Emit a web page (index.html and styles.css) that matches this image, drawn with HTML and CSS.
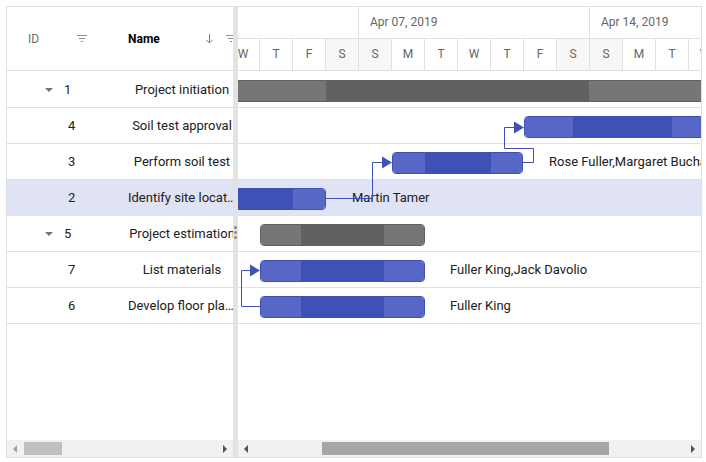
FILE: index.html
```html
<!DOCTYPE html>
<html>
<head>
<meta charset="utf-8">
<link rel="stylesheet" href="styles.css">
</head>
<body>
<div class="gantt">
  <div class="grid-pane">
    <div class="grid-header">
      <div class="hcell id-h">
        <span class="htext">ID</span>
        <svg class="filter" width="10" height="8" viewBox="0 0 10 8"><path d="M0 0.5H10M2 3.5H8M4 6.5H6" stroke="#8f8f8f" stroke-width="1"/></svg>
      </div>
      <div class="hcell name-h">
        <span class="htext bold">Name</span>
        <svg class="sort" width="7" height="10" viewBox="0 0 7 10"><path d="M3.5 0V9M0.5 6L3.5 9L6.5 6" stroke="#7a7a8c" stroke-width="1" fill="none"/></svg>
        <svg class="filter" width="10" height="8" viewBox="0 0 10 8"><path d="M0 0.5H10M2 3.5H8M4 6.5H6" stroke="#8f8f8f" stroke-width="1"/></svg>
      </div>
    </div>
    <div class="grid-body">
      <div class="row"><div class="cell id parent"><span class="expand"></span>1</div><div class="cell name">Project initiation</div></div>
      <div class="row"><div class="cell id">4</div><div class="cell name">Soil test approval</div></div>
      <div class="row"><div class="cell id">3</div><div class="cell name">Perform soil test</div></div>
      <div class="row sel"><div class="cell id">2</div><div class="cell name">Identify site location</div></div>
      <div class="row"><div class="cell id parent"><span class="expand"></span>5</div><div class="cell name">Project estimation</div></div>
      <div class="row"><div class="cell id">7</div><div class="cell name">List materials</div></div>
      <div class="row"><div class="cell id">6</div><div class="cell name">Develop floor plan for estimation</div></div>
    </div>
    <div class="hscroll">
      <span class="arr left dim"></span>
      <span class="thumb light" style="margin-left:7px;width:38px"></span>
      <span class="spacer"></span>
      <span class="arr right"></span>
    </div>
  </div>
  <div class="splitter"><span class="handle"><i></i><i></i><i></i></span></div>
  <div class="chart-pane">
    <div class="timeline">
      <div class="tier">
        <div class="wcell first"></div>
        <div class="wcell">Apr 07, 2019</div>
        <div class="wcell">Apr 14, 2019</div>
      </div>
      <div class="tier">
        <div class="dcell">W</div>
        <div class="dcell">T</div>
        <div class="dcell">F</div>
        <div class="dcell we">S</div>
        <div class="dcell we">S</div>
        <div class="dcell">M</div>
        <div class="dcell">T</div>
        <div class="dcell">W</div>
        <div class="dcell">T</div>
        <div class="dcell">F</div>
        <div class="dcell we">S</div>
        <div class="dcell we">S</div>
        <div class="dcell">M</div>
        <div class="dcell">T</div>
        <div class="dcell">W</div>
      </div>
    </div>
    <div class="chart-body">
      <div class="crow"></div>
      <div class="crow"></div>
      <div class="crow"></div>
      <div class="crow sel"></div>
      <div class="crow"></div>
      <div class="crow"></div>
      <div class="crow"></div>

      <div class="bar parent" style="left:-10px;top:9px;width:490px">
        <span class="seg l" style="width:97px"></span><span class="seg d" style="width:263px"></span><span class="seg l" style="width:128px"></span>
      </div>
      <div class="bar" style="left:286px;top:45px;width:200px">
        <span class="seg l" style="width:48px"></span><span class="seg d" style="width:99px"></span><span class="seg l" style="width:51px"></span>
      </div>
      <div class="bar" style="left:154px;top:81px;width:131px">
        <span class="seg l" style="width:32px"></span><span class="seg d" style="width:66px"></span><span class="seg l" style="width:31px"></span>
      </div>
      <div class="bar" style="left:-60px;top:117px;width:148px">
        <span class="seg d" style="width:114px"></span><span class="seg l" style="width:32px"></span>
      </div>
      <div class="bar parent" style="left:22px;top:153px;width:165px">
        <span class="seg l" style="width:40px"></span><span class="seg d" style="width:83px"></span><span class="seg l" style="width:40px"></span>
      </div>
      <div class="bar" style="left:22px;top:189px;width:165px">
        <span class="seg l" style="width:40px"></span><span class="seg d" style="width:83px"></span><span class="seg l" style="width:40px"></span>
      </div>
      <div class="bar" style="left:22px;top:225px;width:165px">
        <span class="seg l" style="width:40px"></span><span class="seg d" style="width:83px"></span><span class="seg l" style="width:40px"></span>
      </div>

      <div class="blabel" style="left:311px;top:73px">Rose Fuller,Margaret Buchanan</div>
      <div class="blabel" style="left:114px;top:109px">Martin Tamer</div>
      <div class="blabel" style="left:212px;top:181px">Fuller King,Jack Davolio</div>
      <div class="blabel" style="left:212px;top:217px">Fuller King</div>

      <svg class="links" width="463" height="369" viewBox="0 0 463 369">
        <g fill="none" stroke="#3f51b5" stroke-width="1">
          <path d="M285 91.5H295.5V77.5H266.5V56.5H277"/>
          <path d="M88 127.5H134.5V91.5H145"/>
          <path d="M22 235.5H3.5V199.5H13"/>
        </g>
        <g fill="#3f51b5">
          <path d="M276 50.5L286 56.5L276 62.5Z"/>
          <path d="M144 85.5L154 91.5L144 97.5Z"/>
          <path d="M12 193.5L22 199.5L12 205.5Z"/>
        </g>
      </svg>
    </div>
    <div class="hscroll wide">
      <span class="arr left"></span>
      <span class="thumb" style="margin-left:74px;width:287px"></span>
      <span class="spacer"></span>
      <span class="arr right"></span>
    </div>
  </div>
</div>
</body>
</html>
```

FILE: styles.css
```css
* {
  box-sizing: border-box;
  margin: 0;
  padding: 0;
}

body {
  margin: 0;
  padding: 6px;
  background: #fff;
  font-family: Roboto, "Liberation Sans", sans-serif;
  font-size: 13px;
  color: #212121;
}

.gantt {
  width: 696px;
  height: 452px;
  border: 1px solid #e0e0e0;
  display: flex;
  overflow: hidden;
}

/* ---------- grid pane ---------- */
.grid-pane {
  width: 226px;
  flex: none;
  display: flex;
  flex-direction: column;
  overflow: hidden;
}

.grid-header {
  height: 64px;
  flex: none;
  display: flex;
  border-bottom: 1px solid #e0e0e0;
}

.hcell {
  flex: none;
  display: flex;
  align-items: center;
  padding: 0 21px;
  font-size: 12px;
}

.id-h {
  width: 100px;
  padding-right: 20px;
}

.name-h {
  width: 150px;
}

.htext {
  color: #6f6f6f;
}

.htext.bold {
  color: #000;
  font-weight: 700;
}

.filter {
  margin-left: auto;
  display: block;
}

.name-h .sort {
  margin-left: auto;
  display: block;
}

.name-h .filter {
  margin-left: 13px;
}

.grid-body {
  flex: 1;
  padding-top: 1px;
  overflow: hidden;
}

.row {
  height: 36px;
  display: flex;
  border-bottom: 1px solid #e0e0e0;
}

.row.sel,
.crow.sel {
  background: #e0e3f3;
}

.cell {
  flex: none;
  line-height: 35px;
  white-space: nowrap;
}

.cell.id {
  width: 100px;
  padding-left: 61px;
}

.cell.id.parent {
  padding-left: 38px;
  display: flex;
  align-items: center;
}

.expand {
  display: block;
  width: 0;
  height: 0;
  border-left: 4px solid transparent;
  border-right: 4px solid transparent;
  border-top: 4px solid #757575;
  margin-right: 11px;
}

.cell.name {
  width: 150px;
  padding: 0 21px;
  text-align: center;
  overflow: hidden;
  text-overflow: ellipsis;
}

/* ---------- splitter ---------- */
.splitter {
  width: 5px;
  flex: none;
  background: #e3e3e3;
  display: flex;
  justify-content: center;
  padding-top: 219px;
}

.handle {
  display: flex;
  flex-direction: column;
  gap: 2px;
}

.handle i {
  display: block;
  width: 3px;
  height: 3px;
  border-radius: 50%;
  background: #8a8a8a;
}

/* ---------- chart pane ---------- */
.chart-pane {
  flex: 1;
  min-width: 0;
  display: flex;
  flex-direction: column;
  overflow: hidden;
}

.timeline {
  height: 64px;
  flex: none;
  overflow: hidden;
}

.tier {
  height: 32px;
  display: flex;
  margin-left: -11px;
  border-bottom: 1px solid #e0e0e0;
}

.wcell {
  flex: none;
  width: 231px;
  border-right: 1px solid #e0e0e0;
  padding-left: 11px;
  line-height: 31px;
  font-size: 12px;
  color: #666;
}

.wcell.first {
  width: 132px;
}

.dcell {
  flex: none;
  width: 33px;
  border-right: 1px solid #e0e0e0;
  text-align: center;
  line-height: 31px;
  font-size: 12px;
  color: #666;
}

.dcell.we {
  background: #f7f7f7;
}

.chart-body {
  flex: 1;
  position: relative;
  overflow: hidden;
  padding-top: 1px;
}

.crow {
  height: 36px;
  border-bottom: 1px solid #e0e0e0;
}

.bar {
  position: absolute;
  height: 22px;
  display: flex;
  border: 1px solid #3f51b5;
  border-radius: 4px;
  overflow: hidden;
}

.bar .seg {
  display: block;
  flex: none;
  height: 100%;
}

.bar .seg.l {
  background: #5767c6;
}

.bar .seg.d {
  background: #3f51b5;
}

.bar.parent {
  border-color: #616161;
}

.bar.parent .seg.l {
  background: #767676;
}

.bar.parent .seg.d {
  background: #616161;
}

.blabel {
  position: absolute;
  line-height: 35px;
  white-space: nowrap;
  color: #212121;
}

.links {
  position: absolute;
  left: 0;
  top: 0;
  pointer-events: none;
}

/* ---------- scrollbars ---------- */
.hscroll {
  height: 17px;
  flex: none;
  background: #f1f1f1;
  display: flex;
  align-items: center;
  padding: 0 6px;
}

.spacer {
  flex: 1;
}

.thumb {
  display: block;
  height: 13px;
  background: #a6a6a6;
  flex: none;
}

.thumb.light {
  background: #c1c1c1;
}

.arr {
  display: block;
  width: 0;
  height: 0;
  border-top: 4px solid transparent;
  border-bottom: 4px solid transparent;
  flex: none;
}

.arr.left {
  border-right: 4px solid #505050;
}

.arr.right {
  border-left: 4px solid #505050;
}

.arr.left.dim {
  border-right-color: #a3a3a3;
}
```
